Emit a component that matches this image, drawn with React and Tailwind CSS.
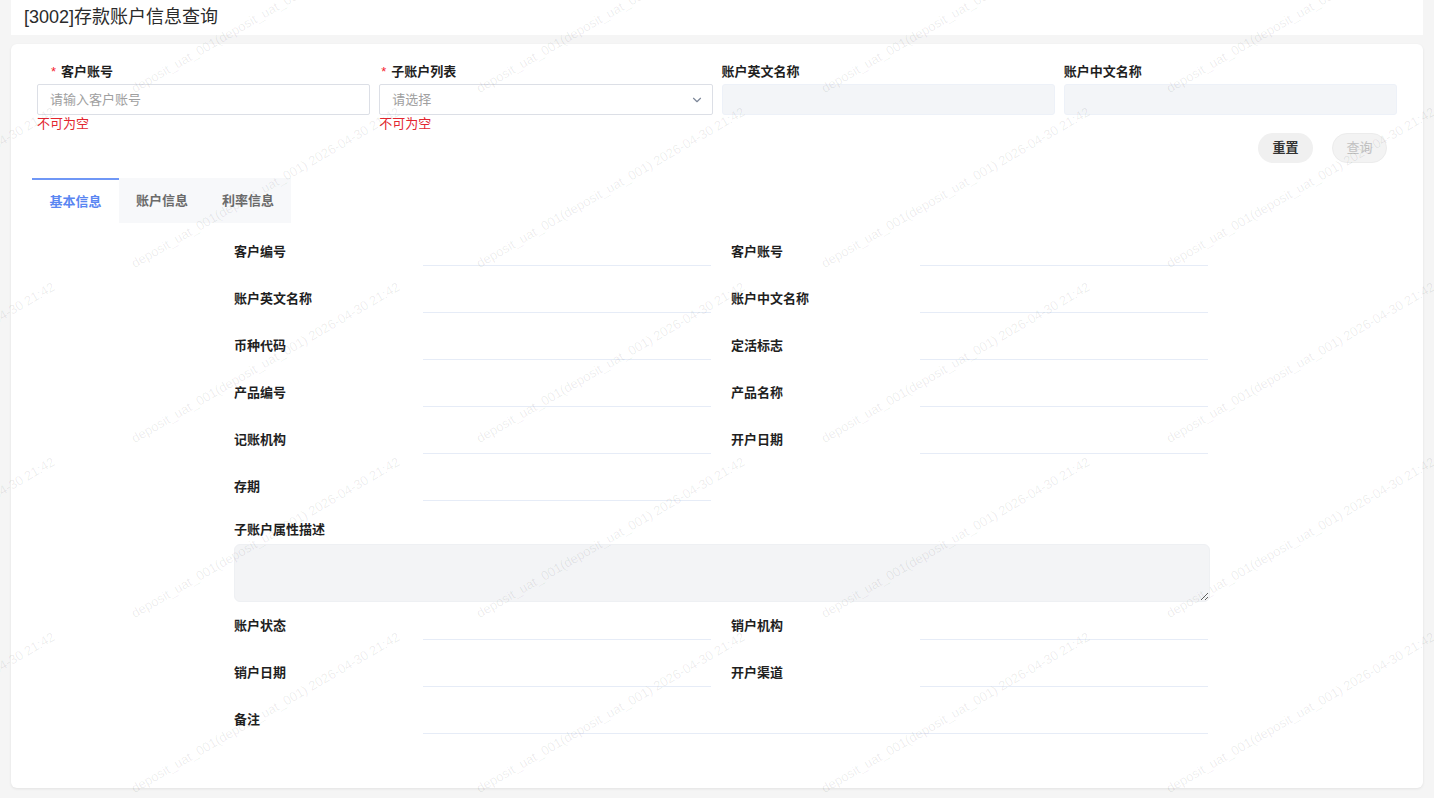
import { ChevronDown } from "lucide-react";

const FONT = { fontFamily: '"Liberation Sans", "Noto Sans CJK SC", sans-serif' };

const WM_TEXT = "deposit_uat_001(deposit_uat_001) 2026-04-30 21:42";

// faint user/date watermark tiled over the whole page
const Watermark = () => (
  <div className="pointer-events-none absolute inset-0 overflow-hidden z-20">
    <div className="grid grid-cols-[repeat(6,345px)] auto-rows-[175px] -ml-[252px] -mt-[75px] w-[2070px]">
      {Array.from({ length: 36 }).map((_, i) => (
        <div key={i} className="flex items-center justify-center">
          <span className="whitespace-nowrap text-[13px] text-black/[0.08] -rotate-30">{WM_TEXT}</span>
        </div>
      ))}
    </div>
  </div>
);

const QueryField = ({ label, required, indent, children, error }) => (
  <div className="flex flex-col">
    <div className={`h-[18px] leading-[18px] mb-[3px] text-[13px] font-bold text-[#1f1f1f] ${indent}`}>
      {required && <span className="text-[#f5222d] mr-[5px] font-normal">*</span>}
      {label}
    </div>
    {children}
    <div className="h-[16px] leading-[16px] text-[13px] text-[#e3262f] mt-[1px]">{error}</div>
  </div>
);

const DetailCell = ({ label, wide }) => (
  <div className={`flex h-[47px] ${wide ? "col-span-2" : ""}`}>
    <div className="w-[189px] shrink-0 pt-[10px] leading-[18px] text-[13px] font-bold text-[#1f1f1f]">{label}</div>
    <div className={`h-[33px] border-b border-[#e6ecf7] ${wide ? "w-[787px]" : "w-[288px]"}`} />
  </div>
);

const rowsTop = [
  ["客户编号", "客户账号"],
  ["账户英文名称", "账户中文名称"],
  ["币种代码", "定活标志"],
  ["产品编号", "产品名称"],
  ["记账机构", "开户日期"],
  ["存期", null],
];

const rowsBottom = [
  ["账户状态", "销户机构"],
  ["销户日期", "开户渠道"],
];

export default function App() {
  return (
    <div className="relative min-h-[798px] bg-[#f5f5f5] overflow-hidden" style={FONT}>
      <div className="mx-[11px] h-[35px] bg-white flex items-center px-[13px] text-[18px] text-[#2b2b2b]">
        [3002]存款账户信息查询
      </div>

      <div className="mx-[11px] mt-[9px] h-[744px] rounded-md bg-white shadow-[0_1px_3px_rgba(0,0,0,0.08)] px-[26px] pt-[19px]">
        {/* query conditions */}
        <div className="grid grid-cols-4 gap-x-[9px]">
          <QueryField label="客户账号" required indent="pl-[14px]" error="不可为空">
            <input
              className="h-[31px] w-full rounded-[2px] border border-[#dcdfe6] px-[12px] text-[13px] outline-none placeholder:text-[#a0a0a0]"
              placeholder="请输入客户账号"
            />
          </QueryField>
          <QueryField label="子账户列表" required indent="pl-[2px]" error="不可为空">
            <div className="h-[31px] w-full rounded-[2px] border border-[#dcdfe6] px-[12px] flex items-center justify-between text-[13px] text-[#a0a0a0]">
              <span>请选择</span>
              <ChevronDown className="w-[14px] h-[14px] text-[#7d8799] -mr-[4px]" strokeWidth={2} />
            </div>
          </QueryField>
          <QueryField label="账户英文名称">
            <div className="h-[31px] w-full rounded-[3px] border border-[#edf1f8] bg-[#f3f5f8]" />
          </QueryField>
          <QueryField label="账户中文名称">
            <div className="h-[31px] w-full rounded-[3px] border border-[#edf1f8] bg-[#f3f5f8]" />
          </QueryField>
        </div>

        <div className="flex justify-end gap-[19px] pr-[10px] mt-[1px]">
          <button className="h-[30px] w-[55px] rounded-full bg-[#f0f0f0] text-[13px] font-bold text-[#333]">重置</button>
          <button className="h-[30px] w-[55px] rounded-full bg-[#f3f3f3] border border-[#ececec] text-[13px] text-[#c2c2c2]">查询</button>
        </div>

        {/* tabs */}
        <div className="flex -ml-[5px] mt-[15px] h-[45px] text-[13px] font-bold">
          <div className="w-[87px] border-t-2 border-[#6f97f6] flex items-center justify-center text-[#5a86f2]">基本信息</div>
          <div className="w-[86px] bg-[#f7f8fa] flex items-center justify-center text-[#6b6b6b]">账户信息</div>
          <div className="w-[86px] bg-[#f7f8fa] flex items-center justify-center text-[#6b6b6b]">利率信息</div>
        </div>

        {/* basic info */}
        <div className="ml-[197px] w-[976px] mt-[10px]">
          <div className="grid grid-cols-[477px_477px] gap-x-[20px]">
            {rowsTop.map(([a, b]) => [
              <DetailCell key={a} label={a} />,
              b ? <DetailCell key={b} label={b} /> : <div key={a + "-e"} />,
            ])}
          </div>

          <div className="mt-[6px] leading-[18px] text-[13px] font-bold text-[#1f1f1f]">子账户属性描述</div>
          <textarea
            readOnly
            className="mt-[5px] block h-[58px] w-[976px] resize-y rounded-md border border-[#eef0f3] bg-[#f3f4f6] outline-none"
          />

          <div className="grid grid-cols-[477px_477px] gap-x-[20px] mt-[5px]">
            {rowsBottom.map(([a, b]) => [<DetailCell key={a} label={a} />, <DetailCell key={b} label={b} />])}
            <DetailCell label="备注" wide />
          </div>
        </div>
      </div>

      <Watermark />
    </div>
  );
}
